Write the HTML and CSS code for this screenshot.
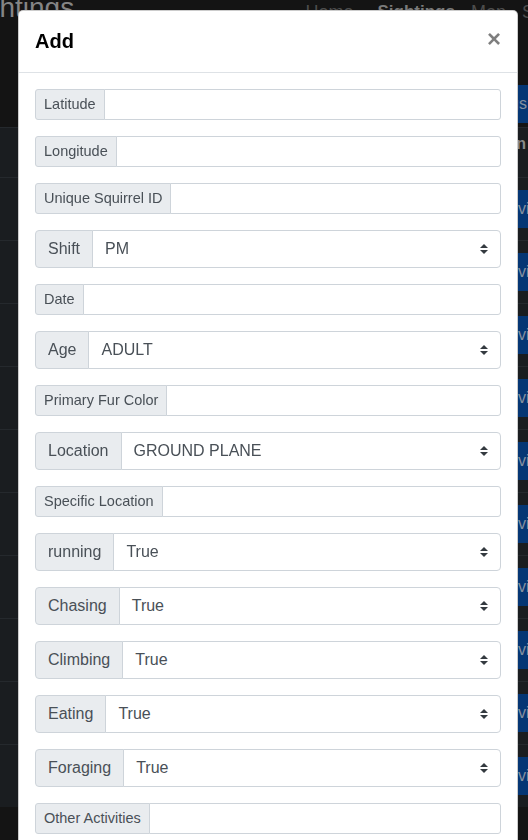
FILE: index.html
```html
<!DOCTYPE html>
<html lang="en">
<head>
<meta charset="utf-8">
<title>Add</title>
<link rel="stylesheet" href="styles.css">
</head>
<body>
<div class="page">
  <header class="topbar">
    <div class="brand">Sightings</div>
    <nav class="nav">
      <span class="nav-link">Home</span>
      <span class="nav-link active">Sightings</span>
      <span class="nav-link">Map</span>
      <span class="nav-link">Stats</span>
    </nav>
  </header>
  <div class="toolbar"><span class="btn btn-top">Add sightings</span></div>
  <div class="table">
    <div class="thead"><span class="th">Action</span></div>
    <div class="tr"><span class="btn">view</span></div>
    <div class="tr"><span class="btn">view</span></div>
    <div class="tr"><span class="btn">view</span></div>
    <div class="tr"><span class="btn">view</span></div>
    <div class="tr"><span class="btn">view</span></div>
    <div class="tr"><span class="btn">view</span></div>
    <div class="tr"><span class="btn">view</span></div>
    <div class="tr"><span class="btn">view</span></div>
    <div class="tr"><span class="btn">view</span></div>
    <div class="tr"><span class="btn">view</span></div>
  </div>
</div>

<div class="modal">
  <div class="modal-dialog">
    <div class="modal-content">
      <div class="modal-header">
        <h5 class="modal-title">Add</h5>
        <span class="close">&times;</span>
      </div>
      <div class="modal-body">
        <div class="form-group"><div class="input-group sm"><span class="label">Latitude</span><span class="control"></span></div></div>
        <div class="form-group"><div class="input-group sm"><span class="label">Longitude</span><span class="control"></span></div></div>
        <div class="form-group"><div class="input-group sm"><span class="label">Unique Squirrel ID</span><span class="control"></span></div></div>
        <div class="form-group"><div class="input-group lg"><span class="label">Shift</span><span class="control select"><span>PM</span><svg class="arrow" viewBox="0 0 4 5" width="8" height="10"><path d="M2 0L0 2h4zm0 5L0 3h4z"/></svg></span></div></div>
        <div class="form-group"><div class="input-group sm"><span class="label">Date</span><span class="control"></span></div></div>
        <div class="form-group"><div class="input-group lg"><span class="label">Age</span><span class="control select"><span>ADULT</span><svg class="arrow" viewBox="0 0 4 5" width="8" height="10"><path d="M2 0L0 2h4zm0 5L0 3h4z"/></svg></span></div></div>
        <div class="form-group"><div class="input-group sm"><span class="label">Primary Fur Color</span><span class="control"></span></div></div>
        <div class="form-group"><div class="input-group lg"><span class="label">Location</span><span class="control select"><span>GROUND PLANE</span><svg class="arrow" viewBox="0 0 4 5" width="8" height="10"><path d="M2 0L0 2h4zm0 5L0 3h4z"/></svg></span></div></div>
        <div class="form-group"><div class="input-group sm"><span class="label">Specific Location</span><span class="control"></span></div></div>
        <div class="form-group"><div class="input-group lg"><span class="label">running</span><span class="control select"><span>True</span><svg class="arrow" viewBox="0 0 4 5" width="8" height="10"><path d="M2 0L0 2h4zm0 5L0 3h4z"/></svg></span></div></div>
        <div class="form-group"><div class="input-group lg"><span class="label">Chasing</span><span class="control select"><span>True</span><svg class="arrow" viewBox="0 0 4 5" width="8" height="10"><path d="M2 0L0 2h4zm0 5L0 3h4z"/></svg></span></div></div>
        <div class="form-group"><div class="input-group lg"><span class="label">Climbing</span><span class="control select"><span>True</span><svg class="arrow" viewBox="0 0 4 5" width="8" height="10"><path d="M2 0L0 2h4zm0 5L0 3h4z"/></svg></span></div></div>
        <div class="form-group"><div class="input-group lg"><span class="label">Eating</span><span class="control select"><span>True</span><svg class="arrow" viewBox="0 0 4 5" width="8" height="10"><path d="M2 0L0 2h4zm0 5L0 3h4z"/></svg></span></div></div>
        <div class="form-group"><div class="input-group lg"><span class="label">Foraging</span><span class="control select"><span>True</span><svg class="arrow" viewBox="0 0 4 5" width="8" height="10"><path d="M2 0L0 2h4zm0 5L0 3h4z"/></svg></span></div></div>
        <div class="form-group"><div class="input-group sm"><span class="label">Other Activities</span><span class="control"></span></div></div>
      </div>
    </div>
  </div>
</div>
</body>
</html>
```
FILE: styles.css
```css
* { box-sizing: border-box; }

html, body {
  margin: 0;
  height: 840px;
  overflow: hidden;
}

body {
  background: #141414;
  font-family: "Liberation Sans", Arial, sans-serif;
  color: #212529;
}

.page { width: 528px; }

.topbar {
  height: 85px;
  display: flex;
  align-items: flex-start;
}

.brand {
  margin: -8px 0 0 -41px;
  font-size: 28px;
  line-height: 32px;
  color: #858585;
  white-space: nowrap;
}

.nav {
  margin-left: auto;
  margin-right: -43px;
  margin-top: 1px;
  display: flex;
}

.nav-link {
  padding: 0 8px;
  font-size: 18px;
  line-height: 22px;
  color: #4d4d4d;
  white-space: nowrap;
}

.nav-link:first-child { padding-right: 16px; }

.nav-link.active { color: #7a7a7a; font-weight: 700; font-size: 17px; }

.toolbar {
  height: 42px;
  display: flex;
  justify-content: flex-end;
}

.btn {
  display: inline-block;
  height: 38px;
  padding: 7px 12px;
  font-size: 16px;
  line-height: 24px;
  border-radius: 4px;
  background: #053674;
  color: #8690a0;
  white-space: nowrap;
}

.btn-top { margin-right: -11px; }

.table { background: #1a1d20; }

.thead {
  height: 50px;
  border-top: 1px solid #25292d;
  display: flex;
  justify-content: flex-end;
  align-items: flex-start;
  padding: 4px 12px 0;
}

.th {
  margin-right: -10px;
  font-weight: 700;
  font-size: 16px;
  line-height: 24px;
  color: #8a8a8a;
}

.tr {
  height: 63px;
  border-top: 1px solid #25292d;
  padding: 12px;
  display: flex;
  justify-content: flex-end;
}

.tr .btn { margin-right: -46px; }

/* Modal */
.modal {
  position: fixed;
  inset: 0;
  overflow: hidden;
}

.modal-dialog {
  width: 500px;
  margin: 10px 0 0 18px;
}

.modal-content {
  background: #fff;
  border: 1px solid rgba(0, 0, 0, 0.2);
  border-radius: 5px;
}

.modal-header {
  display: flex;
  align-items: flex-start;
  padding: 16px;
  border-bottom: 1px solid #dee2e6;
}

.modal-title {
  margin: 0;
  font-size: 20px;
  line-height: 29px;
  font-weight: 700;
  color: #000;
}

.close {
  margin: -16px -16px -16px auto;
  padding: 16px;
  font-size: 24px;
  line-height: 24px;
  font-weight: 700;
  color: #000;
  opacity: 0.5;
}

.modal-body { padding: 16px; }

.form-group { margin-bottom: 16px; }

.input-group { display: flex; }

.label {
  background: #e9ecef;
  border: 1px solid #ced4da;
  color: #495057;
  white-space: nowrap;
}

.control {
  flex: 1;
  margin-left: -1px;
  background: #fff;
  border: 1px solid #ced4da;
}

.sm { height: 31px; }

.sm .label {
  padding: 4px 8px;
  font-size: 14.5px;
  line-height: 21px;
  border-radius: 3px 0 0 3px;
}

.sm .control { border-radius: 0 3px 3px 0; }

.lg { height: 38px; }

.lg .label {
  padding: 6px 12px;
  font-size: 16px;
  line-height: 24px;
  border-radius: 4px 0 0 4px;
}

.lg .control { border-radius: 0 4px 4px 0; }

.select {
  display: flex;
  align-items: center;
  justify-content: space-between;
  padding: 6px 12px;
  font-size: 16px;
  line-height: 24px;
  color: #495057;
}

.arrow { fill: #343a40; flex: none; }
```
